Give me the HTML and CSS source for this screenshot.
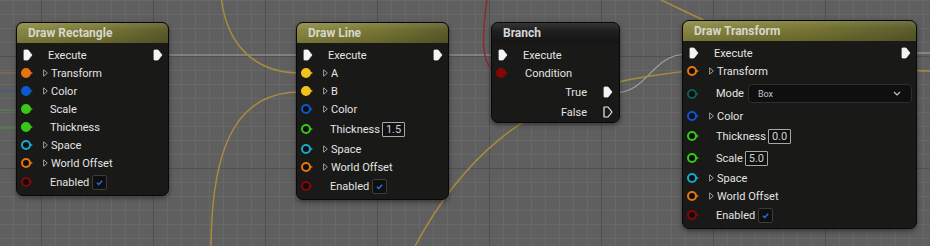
FILE: index.html
```html
<!DOCTYPE html>
<html lang="en">
<head>
  <meta charset="UTF-8" />
  <title>Blueprint Graph</title>
  <link rel="stylesheet" href="styles.css">
</head>
<body>
  <div class="graph">
    <svg class="wires" width="930" height="246" viewBox="0 0 930 246">
      <path class="w-exec" d="M163 55 H302"/>
      <path class="w-exec" d="M442 55 H498"/>
      <path class="w-exec" d="M613 93 C650 93, 650 54, 688 54"/>
      <path class="w-exec" d="M911 53 H930"/>
      <path class="w-orange" d="M0 73 H22"/>
      <path class="w-blue" d="M0 91 H22"/>
      <path class="w-green" d="M0 110 H22"/>
      <path class="w-green" d="M0 128 H22"/>
      <path class="w-vec" d="M221 -4 C226 45, 255 73, 300 73"/>
      <path class="w-vec" d="M211 250 C211 140, 240 92, 300 92"/>
      <path class="w-vec" d="M413 250 C455 170, 520 95, 650 76 S850 70, 930 71"/>
      <path class="w-vec" d="M648 -6 C670 4, 690 14, 712 24"/>
      <path class="w-bool" d="M487 -2 C483 30, 478 70, 500 73"/>
    </svg>

    <!-- Draw Rectangle -->
    <div class="node node-draw" id="drawRect">
      <div class="node-head">Draw Rectangle</div>
      <div class="node-body">
        <div class="row">
          <svg class="exec" viewBox="0 0 10 12"><path d="M1 1.5Q1 1 1.5 1H5L9 6L5 11H1.5Q1 11 1 10.5Z"/></svg>
          <span class="lbl exec-lbl">Execute</span>
          <svg class="exec exec-out" viewBox="0 0 10 12"><path d="M1 1.5Q1 1 1.5 1H5L9 6L5 11H1.5Q1 11 1 10.5Z"/></svg>
        </div>
        <div class="row"><i class="pin orange on"></i><svg class="tri" viewBox="0 0 5 8"><path d="M.6 .8L4.4 4L.6 7.2Z"/></svg><span class="lbl">Transform</span></div>
        <div class="row"><i class="pin blue on"></i><svg class="tri" viewBox="0 0 5 8"><path d="M.6 .8L4.4 4L.6 7.2Z"/></svg><span class="lbl">Color</span></div>
        <div class="row"><i class="pin green on"></i><span class="lbl plain">Scale</span></div>
        <div class="row"><i class="pin green on"></i><span class="lbl plain">Thickness</span></div>
        <div class="row"><i class="pin cyan"></i><svg class="tri" viewBox="0 0 5 8"><path d="M.6 .8L4.4 4L.6 7.2Z"/></svg><span class="lbl">Space</span></div>
        <div class="row"><i class="pin orange"></i><svg class="tri" viewBox="0 0 5 8"><path d="M.6 .8L4.4 4L.6 7.2Z"/></svg><span class="lbl">World Offset</span></div>
        <div class="row check-row"><i class="pin red"></i><span class="lbl plain">Enabled</span>
          <span class="check"><svg viewBox="0 0 15 15"><path d="M4.5 7.8L6.6 9.8L10.6 5.4"/></svg></span>
        </div>
      </div>
    </div>

    <!-- Draw Line -->
    <div class="node node-draw" id="drawLine">
      <div class="node-head">Draw Line</div>
      <div class="node-body">
        <div class="row">
          <svg class="exec" viewBox="0 0 10 12"><path d="M1 1.5Q1 1 1.5 1H5L9 6L5 11H1.5Q1 11 1 10.5Z"/></svg>
          <span class="lbl exec-lbl">Execute</span>
          <svg class="exec exec-out" viewBox="0 0 10 12"><path d="M1 1.5Q1 1 1.5 1H5L9 6L5 11H1.5Q1 11 1 10.5Z"/></svg>
        </div>
        <div class="row"><i class="pin yellow on"></i><svg class="tri" viewBox="0 0 5 8"><path d="M.6 .8L4.4 4L.6 7.2Z"/></svg><span class="lbl">A</span></div>
        <div class="row"><i class="pin yellow on"></i><svg class="tri" viewBox="0 0 5 8"><path d="M.6 .8L4.4 4L.6 7.2Z"/></svg><span class="lbl">B</span></div>
        <div class="row"><i class="pin blue"></i><svg class="tri" viewBox="0 0 5 8"><path d="M.6 .8L4.4 4L.6 7.2Z"/></svg><span class="lbl">Color</span></div>
        <div class="row tall"><i class="pin green"></i><span class="lbl plain">Thickness</span><span class="num">1.5</span></div>
        <div class="row"><i class="pin cyan"></i><svg class="tri" viewBox="0 0 5 8"><path d="M.6 .8L4.4 4L.6 7.2Z"/></svg><span class="lbl">Space</span></div>
        <div class="row"><i class="pin orange"></i><svg class="tri" viewBox="0 0 5 8"><path d="M.6 .8L4.4 4L.6 7.2Z"/></svg><span class="lbl">World Offset</span></div>
        <div class="row check-row"><i class="pin red"></i><span class="lbl plain">Enabled</span>
          <span class="check"><svg viewBox="0 0 15 15"><path d="M4.5 7.8L6.6 9.8L10.6 5.4"/></svg></span>
        </div>
      </div>
    </div>

    <!-- Branch -->
    <div class="node node-branch" id="branch">
      <div class="node-head">Branch</div>
      <div class="node-body">
        <div class="row">
          <svg class="exec" viewBox="0 0 10 12"><path d="M1 1.5Q1 1 1.5 1H5L9 6L5 11H1.5Q1 11 1 10.5Z"/></svg>
          <span class="lbl exec-lbl">Execute</span>
        </div>
        <div class="row"><i class="pin red on"></i><span class="lbl plain">Condition</span></div>
        <div class="row out">
          <span class="lbl">True</span>
          <svg class="exec" viewBox="0 0 10 12"><path d="M1 1.5Q1 1 1.5 1H5L9 6L5 11H1.5Q1 11 1 10.5Z"/></svg>
        </div>
        <div class="row out">
          <span class="lbl">False</span>
          <svg class="exec hollow" viewBox="0 0 10 12"><path d="M1 1.5Q1 1 1.5 1H5L9 6L5 11H1.5Q1 11 1 10.5Z"/></svg>
        </div>
      </div>
    </div>

    <!-- Draw Transform -->
    <div class="node node-draw" id="drawTransform">
      <div class="node-head">Draw Transform</div>
      <div class="node-body">
        <div class="row">
          <svg class="exec" viewBox="0 0 10 12"><path d="M1 1.5Q1 1 1.5 1H5L9 6L5 11H1.5Q1 11 1 10.5Z"/></svg>
          <span class="lbl exec-lbl">Execute</span>
          <svg class="exec exec-out" viewBox="0 0 10 12"><path d="M1 1.5Q1 1 1.5 1H5L9 6L5 11H1.5Q1 11 1 10.5Z"/></svg>
        </div>
        <div class="row"><i class="pin orange"></i><svg class="tri" viewBox="0 0 5 8"><path d="M.6 .8L4.4 4L.6 7.2Z"/></svg><span class="lbl">Transform</span></div>
        <div class="row mode-row"><i class="pin teal"></i><span class="lbl plain">Mode</span>
          <span class="dropdown"><span>Box</span><svg viewBox="0 0 8 5"><path d="M1 1L4 4L7 1"/></svg></span>
        </div>
        <div class="row"><i class="pin blue"></i><svg class="tri" viewBox="0 0 5 8"><path d="M.6 .8L4.4 4L.6 7.2Z"/></svg><span class="lbl">Color</span></div>
        <div class="row tall"><i class="pin green"></i><span class="lbl plain">Thickness</span><span class="num">0.0</span></div>
        <div class="row tall"><i class="pin green"></i><span class="lbl plain">Scale</span><span class="num">5.0</span></div>
        <div class="row"><i class="pin cyan"></i><svg class="tri" viewBox="0 0 5 8"><path d="M.6 .8L4.4 4L.6 7.2Z"/></svg><span class="lbl">Space</span></div>
        <div class="row"><i class="pin orange"></i><svg class="tri" viewBox="0 0 5 8"><path d="M.6 .8L4.4 4L.6 7.2Z"/></svg><span class="lbl">World Offset</span></div>
        <div class="row check-row"><i class="pin red"></i><span class="lbl plain">Enabled</span>
          <span class="check"><svg viewBox="0 0 15 15"><path d="M4.5 7.8L6.6 9.8L10.6 5.4"/></svg></span>
        </div>
      </div>
    </div>
  </div>
</body>
</html>
```

FILE: styles.css
```css
:root {
  --grid-bg: #5f5f5f;
  --grid-minor: #686868;
  --grid-major: #505050;
  --node-bg: #191917;
  --text: #e4e4e4;
  --pin-hole: #0e0e0e;
}
body {
  margin: 0;
  background: var(--grid-bg);
  font-family: Roboto, 'Liberation Sans', sans-serif;
}
.graph {
  position: relative;
  width: 930px;
  height: 246px;
  overflow: hidden;
  background-color: var(--grid-bg);
  background-image:
    linear-gradient(to right, var(--grid-major) 1px, transparent 1px),
    linear-gradient(to bottom, var(--grid-major) 1px, transparent 1px),
    linear-gradient(to right, var(--grid-minor) 1px, transparent 1px),
    linear-gradient(to bottom, var(--grid-minor) 1px, transparent 1px);
  background-size: 112px 112px, 112px 112px, 14px 14px, 14px 14px;
  background-position: 41px 0, 0 56px, 13px 0, 0 0;
}

/* wires */
.wires {
  position: absolute;
  left: 0;
  top: 0;
}
.wires path {
  fill: none;
  stroke-width: 1.5;
}
.w-exec { stroke: rgba(225, 225, 225, 0.5); stroke-width: 1.2 !important; }
.w-vec { stroke: #a88c3c; }
.w-bool { stroke: #8c2c2c; }
.w-orange { stroke: rgba(230, 120, 20, 0.5); stroke-width: 1 !important; }
.w-blue { stroke: rgba(20, 90, 210, 0.5); stroke-width: 1 !important; }
.w-green { stroke: rgba(60, 200, 30, 0.45); stroke-width: 1 !important; }

/* nodes */
.node {
  position: absolute;
  background: var(--node-bg);
  border: 1px solid #080808;
  border-radius: 7px;
  overflow: hidden;
  box-shadow: 0 2px 5px rgba(0, 0, 0, 0.45);
  color: var(--text);
  font-size: 11px;
}
#drawRect { left: 16px; top: 22px; width: 151px; }
#drawLine { left: 296px; top: 22px; width: 151px; }
#branch { left: 491px; top: 22px; width: 127px; }
#drawTransform { left: 682px; top: 20px; width: 233px; }

.node-head {
  height: 20px;
  line-height: 20px;
  padding-left: 11px;
  font-weight: bold;
  font-size: 12px;
  color: #d6d6ce;
}
.node-draw .node-head {
  background:
    linear-gradient(to bottom, rgba(255, 255, 255, 0.12), rgba(255, 255, 255, 0) 35%, rgba(0, 0, 0, 0.15)),
    linear-gradient(to right, #8a8942, #777633 55%, #5e5d2c);
}
.node-branch .node-head {
  background: linear-gradient(to bottom, #343434, #1d1d1d 45%, #151515);
  color: #d6d6d6;
}
.node-body {
  padding: 3px 0 3px;
}
.node-branch .node-body {
  padding-bottom: 0;
}

.row {
  display: flex;
  align-items: center;
  height: 18px;
  padding-left: 4px;
  padding-right: 5px;
}
.row.tall { height: 22px; }
.row.check-row { height: 20px; }
.row.mode-row { height: 27px; }
.row.out {
  height: 20px;
  justify-content: flex-end;
  padding-right: 6px;
}
.row.out .lbl { margin-right: 16px; }

.lbl {
  white-space: nowrap;
  margin-left: 3px;
}
.lbl.plain { margin-left: 16px; }
.lbl.exec-lbl { margin-left: 15px; }

/* exec pins */
.exec {
  width: 10px;
  height: 12px;
  flex: none;
}
.exec path {
  fill: #f4f4f4;
  stroke: #f4f4f4;
  stroke-width: 0.8;
  stroke-linejoin: round;
}
.exec.hollow path {
  fill: none;
  stroke-width: 1.2;
}
.row > .exec:first-child { margin-left: 2px; }
.exec-out { margin-left: auto; }

/* data pins */
.pin {
  position: relative;
  box-sizing: border-box;
  width: 10px;
  height: 10px;
  border-radius: 50%;
  border: 2px solid var(--pc);
  background: var(--pin-hole);
  margin-right: 3px;
  flex: none;
}
.pin.on { background: var(--pc); }
.pin::after {
  content: '';
  position: absolute;
  left: 6px;
  top: 1px;
  border-left: 4px solid var(--pc);
  border-top: 2px solid transparent;
  border-bottom: 2px solid transparent;
}
.orange { --pc: #e8740e; }
.blue { --pc: #0c58d0; }
.green { --pc: #38c818; }
.cyan { --pc: #1aa8cc; }
.red { --pc: #860606; }
.yellow { --pc: #f4c01c; }
.teal { --pc: #0b5e56; }

.tri {
  width: 5px;
  height: 8px;
  margin-left: 9px;
  flex: none;
}
.tri path {
  fill: none;
  stroke: #9c9c9c;
  stroke-width: 1;
  stroke-linejoin: round;
}

/* inline value widgets */
.num {
  box-sizing: border-box;
  height: 15px;
  line-height: 13px;
  padding: 0 3px;
  margin-left: 2px;
  border: 1px solid #a8a8a8;
  border-radius: 1px;
  background: #111;
  color: #cfcfcf;
  font-size: 11px;
}
.check {
  box-sizing: border-box;
  width: 15px;
  height: 15px;
  margin-left: 3px;
  border: 1px solid #3c3c3c;
  border-radius: 2px;
  background: #0f0f0f;
}
.check svg {
  display: block;
  width: 13px;
  height: 13px;
}
.check path {
  fill: none;
  stroke: #1c70e0;
  stroke-width: 1.8;
}
.dropdown {
  box-sizing: border-box;
  flex: 1;
  display: flex;
  align-items: center;
  justify-content: space-between;
  height: 19px;
  margin-left: 4px;
  margin-right: -1px;
  padding: 0 10px 0 9px;
  border: 1px solid #2e2e2e;
  border-radius: 4px;
  background: #0f0f0f;
  color: #c4c4c4;
  font-size: 9px;
}
.dropdown svg {
  width: 8px;
  height: 5px;
}
.dropdown path {
  fill: none;
  stroke: #c4c4c4;
  stroke-width: 1.2;
}
```
